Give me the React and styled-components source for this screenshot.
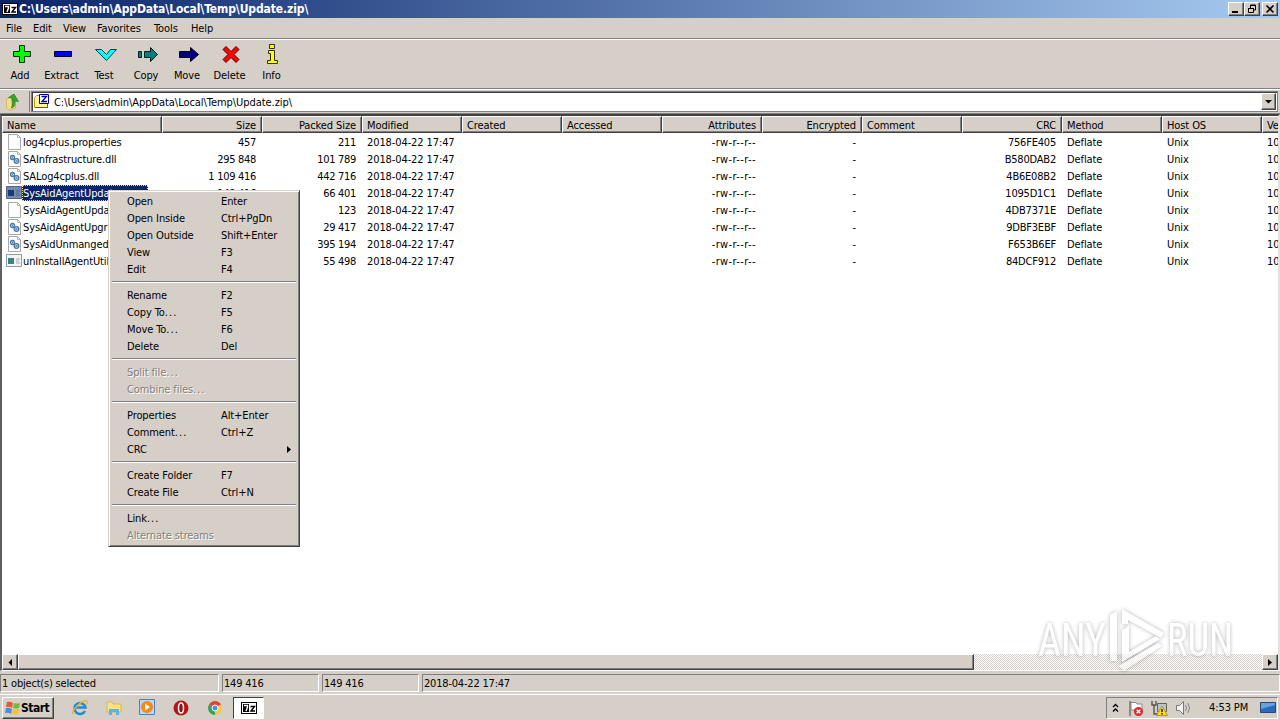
import React from 'react';
import styled, { createGlobalStyle, css } from 'styled-components';

const GlobalStyle = createGlobalStyle`
    *{
        box-sizing:border-box;
    }
    body{
        margin:0;
        background:#d5cfc8;
        overflow:hidden;
        font-family:"DejaVu Sans Condensed", "DejaVu Sans", sans-serif;
        font-stretch:condensed;
        font-size:11px;
        letter-spacing:-0.1px;
        color:#000;
        cursor:default;
    }
    svg{
        display:block;
        flex:none;
    }
`

const raised = css`
    background:#d5cfc8;
    border:1px solid;
    border-color:#fff #404040 #404040 #fff;
    box-shadow:inset -1px -1px 0 #808080;
`

const Desktop = styled.div`
    width:1280px;
    height:720px;
    display:flex;
    flex-direction:column;
    overflow:hidden;
    background:#d5cfc8;
`

const TitleBar = styled.div`
    height:18px;
    flex:none;
    display:flex;
    align-items:center;
    padding:0 2px;
    background:linear-gradient(90deg, #0a246a, #a6caf0);
    color:#fff;
    h1{
        flex:1;
        margin:0 0 0 1px;
        font-size:12px;
        line-height:18px;
        font-weight:bold;
        letter-spacing:-0.1px;
        white-space:nowrap;
    }
`

const WindowButton = styled.button`
    ${raised}
    width:16px;
    height:14px;
    padding:0;
    margin-left:${props => props.$gap ? 2 : 0}px;
    display:flex;
    align-items:center;
    justify-content:center;
`

const MenuBar = styled.div`
    height:21px;
    flex:none;
    display:flex;
    gap:12px;
    padding:0 6px;
    line-height:21px;
    border-bottom:1px solid #808080;
`

const MenuItem = styled.span`
    width:${props => props.$w}px;
    white-space:nowrap;
`

const ToolBar = styled.div`
    height:50px;
    flex:none;
    display:flex;
    padding-left:2px;
    border-top:1px solid #fff;
    border-bottom:1px solid #808080;
`

const Tool = styled.div`
    width:${props => props.$w}px;
    display:flex;
    flex-direction:column;
    align-items:center;
    padding-top:3px;
    gap:3px;
    line-height:14px;
    white-space:nowrap;
    svg{
        margin-left:3px;
    }
`

const AddressBar = styled.div`
    height:25px;
    flex:none;
    display:flex;
    align-items:center;
    border-top:1px solid #fff;
    border-bottom:1px solid #808080;
`

const UpButton = styled.div`
    width:30px;
    height:21px;
    padding-left:4px;
    display:flex;
    align-items:center;
    border-right:1px solid #808080;
`

const PathBox = styled.div`
    flex:1;
    height:21px;
    margin:0 2px 0 1px;
    padding-left:1px;
    display:flex;
    align-items:center;
    background:#fff;
    border:1px solid #808080;
    box-shadow:inset 1px 1px 0 #404040;
    span{
        flex:1;
        padding-top:1px;
        margin-left:4px;
        letter-spacing:-0.05px;
    }
`

const DropButton = styled.div`
    ${raised}
    width:15px;
    height:17px;
    margin-right:1px;
    display:flex;
    align-items:center;
    justify-content:center;
`

const ListView = styled.div`
    height:557px;
    flex:none;
    display:flex;
    flex-direction:column;
    background:#fff;
    border:2px solid;
    border-width:2px 2px 1px 2px;
    border-color:#404040 #e4e1dc #fff #606060;
`

const Row = styled.div`
    height:17px;
    flex:none;
    display:flex;
    line-height:17px;
    overflow:hidden;
`

const Head = styled(Row)`
    margin-bottom:1px;
`

const Cell = styled.div`
    width:${props => props.$w}px;
    flex:none;
    padding:0 6px 0 5px;
    text-align:${props => props.$right ? 'right' : 'left'};
    letter-spacing:${props => props.$ls || -0.1}px;
    white-space:pre;
    overflow:hidden;
`

const HeadCell = styled(Cell)`
    ${raised}
    padding:0 5px 0 4px;
`

const NameCell = styled.div`
    width:160px;
    flex:none;
    display:flex;
    padding-left:4px;
    white-space:nowrap;
`

const FileName = styled.span`
    height:16px;
    line-height:17px;
    padding:0 1px;
    letter-spacing:-0.12px;
    ${props => props.$selected && css`
        width:126px;
        background:#0a246a;
        color:#fff;
        outline:1px dotted #f5db95;
        outline-offset:-1px;
    `}
`

const Body = styled.div`
    flex:1;
    overflow:hidden;
`

const ScrollBar = styled.div`
    height:16px;
    flex:none;
    display:flex;
    background:repeating-conic-gradient(#fff 0 25%, #d5cfc8 0 50%) 0 0/2px 2px;
`

const ScrollArrow = styled.div`
    ${raised}
    width:16px;
    height:16px;
    display:flex;
    align-items:center;
    justify-content:center;
`

const Thumb = styled.div`
    ${raised}
    width:956px;
    margin-right:auto;
`

const StatusBar = styled.div`
    height:20px;
    flex:none;
    display:flex;
    gap:3px;
    margin-top:3px;
`

const StatusCell = styled.div`
    width:${props => props.$w}px;
    flex:${props => props.$w ? 'none' : 1};
    height:18px;
    line-height:17px;
    padding-left:1px;
    border:1px solid;
    border-color:#808080 #fff #fff #808080;
    letter-spacing:-0.2px;
`

const TaskBar = styled.div`
    flex:1;
    display:flex;
    align-items:center;
    border-top:1px solid #fff;
    padding:0 0 0 2px;
`

const StartButton = styled.button`
    ${raised}
    width:52px;
    height:22px;
    padding:0 0 0 2px;
    display:flex;
    align-items:center;
    font:bold 12px "DejaVu Sans Condensed", "DejaVu Sans", sans-serif;
    letter-spacing:-0.5px;
`

const Launch = styled.div`
    width:${props => props.$w}px;
    height:22px;
    display:flex;
    align-items:center;
    justify-content:center;
`

const TaskButton = styled(Launch)`
    background:#fff;
    border:1px solid;
    border-color:#404040 #fff #fff #404040;
    margin-left:-7px;
`

const Tray = styled.div`
    width:172px;
    height:22px;
    margin:0 2px 0 auto;
    padding:0 1px 0 4px;
    display:flex;
    align-items:center;
    border:1px solid;
    border-color:#808080 #fff #fff #808080;
    svg + svg{
        margin-left:7px;
    }
    span{
        margin:0 8px 0 17px;
        flex:1;
        white-space:nowrap;
    }
`

const ContextMenu = styled.div`
    position:absolute;
    left:108px;
    top:190px;
    width:192px;
    height:357px;
    padding:2px 3px;
    background:#d5cfc8;
    border:1px solid;
    border-color:#d5cfc8 #404040 #404040 #d5cfc8;
    box-shadow:inset 1px 1px 0 #fff, inset -1px -1px 0 #808080;
`

const MenuRow = styled.div`
    height:17px;
    line-height:17px;
    padding-left:15px;
    display:flex;
    align-items:center;
    white-space:nowrap;
    color:${props => props.$disabled ? '#808080' : '#000'};
    text-shadow:${props => props.$disabled ? '1px 1px 0 #fff' : 'none'};
    svg{
        margin-left:65px;
    }
`

const Label = styled.span`
    width:94px;
    i{
        font-style:normal;
        letter-spacing:1.1px;
    }
`

const Separator = styled.div`
    height:2px;
    margin:3px 0 4px;
    border-top:1px solid #808080;
    border-bottom:1px solid #fff;
`

const Watermark = styled.div`
    position:absolute;
    left:1032px;
    top:602px;
    filter:drop-shadow(0 0 2px rgba(0,0,0,.45));
    opacity:.65;
`

const SevenZip = () => (
    <svg width="16" height="16">
        <path d="M0 2h16v12H0z" />
        <path d="M1 3h14v10H1z" fill="#fff" />
        <path d="M2 4h6v8H2z" />
        <path d="M3 5.500h3.500v1.500L5 11" fill="none" stroke="#fff" strokeWidth="1.400" />
        <path d="M9.500 6.500h4L10 11h4" fill="none" stroke="#000" strokeWidth="1.400" />
    </svg>
)

const Arrow = ({ d }) => <svg width="7" height="7"><path d={d} /></svg>
const LEFT = 'M5 0v7L1.500 3.500z'
const RIGHT = 'M1 0v7l4-3.500z'
const DOWN = 'M0 2h7L3.500 5.500z'

const TOOLS = [
    { label: 'Add', w: 36, art: <path d="M9.500 2.500h5v6h6v5h-6v6h-5v-6h-6v-5h6z" fill="#0f0" stroke="#003000" /> },
    { label: 'Extract', w: 47, art: <path d="M3.500 8.500h17v5h-17z" fill="#00f" stroke="#000030" /> },
    { label: 'Test', w: 38, art: <path d="M1.500 6.500h6l5 5 4-5h6l-10 11z" fill="#0ff" stroke="#004050" /> },
    { label: 'Copy', w: 46, art: <path d="M2.500 8.500h3v6h-3zM8.500 8.500h6v-4l7 7-7 7v-4h-6z" fill="#008080" stroke="#002020" /> },
    { label: 'Move', w: 36, art: <path d="M2.500 8.500h11v-4l8 7-8 7v-4h-11z" fill="#000080" stroke="#000010" /> },
    { label: 'Delete', w: 49, art: <path d="M7 3.500l5 5 5-5 3 3-5 5 5 5-3 3-5-5-5 5-3-3 5-5-5-5z" fill="#f00" stroke="#500000" /> },
    { label: 'Info', w: 35, art: <path d="M8.500 1.500h5v4h-5zM7.500 7.500h6v10h3v3h-10v-3h3v-7h-2z" fill="#ff0" stroke="#303000" /> },
]

const FileIcon = ({ kind }) => {
    if (kind === 'exe' || kind === 'exeSel') {
        const sel = kind === 'exeSel'
        return (
            <svg width="16" height="16">
                <path d="M.5 1.500h15v12H.5z" fill={sel ? '#7889ae' : '#f4f4f4'} stroke={sel ? '#51648f' : '#8c9aa4'} />
                <path d="M2 5h6v6H2z" fill={sel ? '#153d77' : '#348779'} />
                <path d="M10 6h4M10 8h3M10 10h4" stroke={sel ? '#4b6292' : '#a8aaae'} />
            </svg>
        )
    }
    return (
        <svg width="16" height="16">
            <path d="M2.500.5h9l3 3v12h-12z" fill="#fcfcfc" stroke="#a8a8a8" />
            <path d="M11.500.5v3h3" fill="none" stroke="#b8b8b8" />
            {kind === 'dll' && (
                <g fill="#d4e6f5" stroke="#4878a4" strokeWidth="1.300">
                    <circle cx="6.500" cy="6.500" r="2" />
                    <circle cx="10.500" cy="10" r="2.300" />
                    <path d="M6 6.500h1M9.500 10h2" />
                </g>
            )}
        </svg>
    )
}

const COLUMNS = [
    ['Name', 160], ['Size', 100, true], ['Packed Size', 100, true], ['Modified', 100],
    ['Created', 100], ['Accessed', 100], ['Attributes', 100, true], ['Encrypted', 100, true],
    ['Comment', 100], ['CRC', 100, true], ['Method', 100], ['Host OS', 100], ['Ve', 20],
]

const FILES = [
    ['log4cplus.properties', 'doc', '457', '211', '756FE405'],
    ['SAInfrastructure.dll', 'dll', '295 848', '101 789', 'B580DAB2'],
    ['SALog4cplus.dll', 'dll', '1 109 416', '442 716', '4B6E08B2'],
    ['SysAidAgentUpdat', 'exeSel', '149 416', '66 401', '1095D1C1'],
    ['SysAidAgentUpda', 'doc', '', '123', '4DB7371E'],
    ['SysAidAgentUpgr', 'dll', '', '29 417', '9DBF3EBF'],
    ['SysAidUnmangedU', 'dll', '', '395 194', 'F653B6EF'],
    ['unInstallAgentUtil', 'exe', '', '55 498', '84DCF912'],
]

const MENU = [
    ['Open', 'Enter'], ['Open Inside', 'Ctrl+PgDn'], ['Open Outside', 'Shift+Enter'], ['View', 'F3'], ['Edit', 'F4'],
    null,
    ['Rename', 'F2'], ['Copy To...', 'F5'], ['Move To...', 'F6'], ['Delete', 'Del'],
    null,
    ['Split file...', '', 'disabled'], ['Combine files...', '', 'disabled'],
    null,
    ['Properties', 'Alt+Enter'], ['Comment...', 'Ctrl+Z'], ['CRC', '', 'sub'],
    null,
    ['Create Folder', 'F7'], ['Create File', 'Ctrl+N'],
    null,
    ['Link...', ''], ['Alternate streams', '', 'disabled'],
]

const App = () => (
    <Desktop>
        <GlobalStyle />
        <TitleBar>
            <SevenZip />
            <h1>C:\Users\admin\AppData\Local\Temp\Update.zip\</h1>
            <WindowButton><svg width="10" height="10"><path d="M1 7h6v2H1z" /></svg></WindowButton>
            <WindowButton>
                <svg width="10" height="10"><path d="M3.500 4V1h5v5H6M3 1.500h6M1.500 4.500h5v4h-5zM1 4.500h6" fill="none" stroke="#000" /></svg>
            </WindowButton>
            <WindowButton $gap><svg width="10" height="10"><path d="M1.500 1.500l7 7M8.500 1.500l-7 7" stroke="#000" strokeWidth="1.600" /></svg></WindowButton>
        </TitleBar>
        <MenuBar>
            <MenuItem $w={15}>File</MenuItem>
            <MenuItem $w={18}>Edit</MenuItem>
            <MenuItem $w={22}>View</MenuItem>
            <MenuItem $w={45}>Favorites</MenuItem>
            <MenuItem $w={25}>Tools</MenuItem>
            <MenuItem $w={22}>Help</MenuItem>
        </MenuBar>
        <ToolBar>
            {TOOLS.map(tool => (
                <Tool key={tool.label} $w={tool.w}>
                    <svg width="24" height="23">{tool.art}</svg>
                    {tool.label}
                </Tool>
            ))}
        </ToolBar>
        <AddressBar>
            <UpButton>
                <svg width="18" height="18">
                    <path d="M2.500 6l5-2 4 3v8l-6 2-3-2z" fill="#f5df86" stroke="#d0a850" strokeWidth=".7" />
                    <path d="M7.500 15c3.500-1 4-4 3-7l4 .5L10 1 4.500 4.500l3 .5c1 4 1 7 0 10z" fill="#37a42b" stroke="#277020" strokeWidth=".6" />
                </svg>
            </UpButton>
            <PathBox>
                <svg width="17" height="18">
                    <path d="M1.500 4.500l2-2h3l2 2h6v10h-13z" fill="#fff68c" stroke="#b8a000" />
                    <path d="M2 14.500h12.500v-4" fill="none" stroke="#706000" />
                    <path d="M6.500 1.500h9v9h-9z" fill="#fff" stroke="#0000a0" />
                    <path d="M8.500 3.500h5l-4.500 5h5" fill="none" stroke="#0000a0" strokeWidth="1.300" />
                </svg>
                <span>C:\Users\admin\AppData\Local\Temp\Update.zip\</span>
                <DropButton><Arrow d={DOWN} /></DropButton>
            </PathBox>
        </AddressBar>
        <ListView>
            <Head>
                {COLUMNS.map(([label, w, right]) => <HeadCell key={label} $w={w} $right={right}>{label}</HeadCell>)}
            </Head>
            <Body>
                {FILES.map(([name, kind, size, packed, crc]) => (
                    <Row key={crc}>
                        <NameCell>
                            <FileIcon kind={kind} />
                            <FileName $selected={kind === 'exeSel'}>{name}</FileName>
                        </NameCell>
                        <Cell $w={100} $ls={-0.3} $right>{size}</Cell>
                        <Cell $w={100} $ls={-0.3} $right>{packed}</Cell>
                        <Cell $w={300}>2018-04-22 17:47</Cell>
                        <Cell $w={100} $ls={0.4} $right>-rw-r--r--</Cell>
                        <Cell $w={100} $right>-</Cell>
                        <Cell $w={200} $ls={-0.2} $right>{crc}</Cell>
                        <Cell $w={100}>Deflate</Cell>
                        <Cell $w={100}>Unix</Cell>
                        <Cell $w={20}>10</Cell>
                    </Row>
                ))}
            </Body>
            <ScrollBar>
                <ScrollArrow><Arrow d={LEFT} /></ScrollArrow>
                <Thumb />
                <ScrollArrow><Arrow d={RIGHT} /></ScrollArrow>
            </ScrollBar>
        </ListView>
        <StatusBar>
            <StatusCell $w={219}>1 object(s) selected</StatusCell>
            <StatusCell $w={97}>149 416</StatusCell>
            <StatusCell $w={97}>149 416</StatusCell>
            <StatusCell>2018-04-22 17:47</StatusCell>
        </StatusBar>
        <TaskBar>
            <StartButton>
                <svg width="16" height="16">
                    <path d="M2 2q3-1 6 1L7 8Q4 6 1 7z" fill="#e8582c" />
                    <path d="M9 3q3 1 6 0l-1 5q-3 1-6 0z" fill="#76b83c" />
                    <path d="M1 8q3-1 6 1l-1 5q-3-2-6-1z" fill="#4a8fdc" />
                    <path d="M8 9q3 1 6 0l-1 5q-3 1-6 0z" fill="#f8c030" />
                </svg>
                Start
            </StartButton>
            <Launch $w={52}>
                <svg width="18" height="18">
                    <path d="M14 12a5.500 5.500 0 1 1 .500-3.500H5" fill="none" stroke="#258bd0" strokeWidth="2.600" />
                    <path d="M2 15C-1 13 11 0 16 2q1 1-1 4" fill="none" stroke="#e6b43a" strokeWidth="1.300" />
                </svg>
            </Launch>
            <Launch $w={15}>
                <svg width="18" height="18">
                    <path d="M2 3h5l1 2h8v8H2z" fill="#f6df8d" stroke="#d8b458" />
                    <path d="M4 16v-6h10v6h-3v-3H7v3z" fill="#62b1df" />
                </svg>
            </Launch>
            <Launch $w={52}>
                <svg width="17" height="17">
                    <path d="M.5.5h15v15H.5z" fill="#b8d8f4" stroke="#4884be" />
                    <circle cx="8" cy="8" r="6" fill="#f28a1c" />
                    <path d="M6 4.500l5 3.500-5 3.500z" fill="#fff" />
                </svg>
            </Launch>
            <Launch $w={16}>
                <svg width="16" height="16">
                    <circle cx="8" cy="8" r="7.500" fill="#b81418" />
                    <ellipse cx="8" cy="8" rx="2.500" ry="5" fill="#901014" stroke="#fff" strokeWidth="1.500" />
                </svg>
            </Launch>
            <Launch $w={51}>
                <svg width="14" height="14">
                    <path d="M7 7L1 3.500A7 7 0 0 1 13 3.500z" fill="#dc4438" />
                    <path d="M7 7l6-3.500A7 7 0 0 1 7 14z" fill="#f8ca3c" />
                    <path d="M7 7v7A7 7 0 0 1 1 3.500z" fill="#36a057" />
                    <circle cx="7" cy="7" r="3" fill="#4c8bf5" stroke="#fff" />
                </svg>
            </Launch>
            <TaskButton $w={31}><SevenZip /></TaskButton>
            <Tray>
                <svg width="9" height="12"><path d="M2 5l2.500-2.500L7 5M2 9.500L4.500 7 7 9.500" fill="none" stroke="#000" strokeWidth="1.300" /></svg>
                <svg width="17" height="16">
                    <path d="M3 1v15" stroke="#707070" strokeWidth="1.500" />
                    <path d="M4 2.500h5l1 1.500h5v6H4z" fill="#fff" stroke="#888" />
                    <circle cx="11.500" cy="11.500" r="4.500" fill="#d92a2a" />
                    <path d="M9.700 9.700l3.600 3.600M13.300 9.700l-3.600 3.600" stroke="#fff" strokeWidth="1.500" />
                </svg>
                <svg width="17" height="16">
                    <path d="M6.500 3.500h9v8h-9z" fill="#b8c4cc" stroke="#606060" />
                    <path d="M1 1v4h4V1M3 5v9h4" fill="none" stroke="#555" strokeWidth="1.400" />
                    <path d="M11 6l5.500 9.500h-11z" fill="#ffdc20" stroke="#a08000" strokeWidth=".7" />
                    <path d="M11 9v3M11 13v1.500" stroke="#000" strokeWidth="1.300" />
                </svg>
                <svg width="17" height="16">
                    <path d="M1.500 5.500h3l4-4v13l-4-4h-3z" fill="#f4f4f4" stroke="#777" />
                    <path d="M10.500 5q2 3 0 6M13 3q3 5 0 10" fill="none" stroke="#888" />
                </svg>
                <span>4:53 PM</span>
                <svg width="16" height="14">
                    <path d="M.5 1.500h15v10H.5z" fill="#286cc0" stroke="#244878" />
                    <path d="M1 2h14v2L1 8z" fill="#66a4e0" />
                </svg>
            </Tray>
        </TaskBar>
        <ContextMenu>
            {MENU.map((item, index) => item === null
                ? <Separator key={index} />
                : (
                    <MenuRow key={index} $disabled={item[2] === 'disabled'}>
                        <Label>
                            {item[0].replace('...', '')}
                            {item[0].endsWith('...') && <i>...</i>}
                        </Label>
                        {item[1]}
                        {item[2] === 'sub' && <Arrow d={RIGHT} />}
                    </MenuRow>
                ))}
        </ContextMenu>
        <Watermark>
            <svg width="212" height="76">
                <g fill="#fff" fontFamily="Roboto, sans-serif" fontSize="47">
                    <text x="6" y="54" textLength="68" lengthAdjust="spacingAndGlyphs">ANY</text>
                    <text x="135" y="54" textLength="66" lengthAdjust="spacingAndGlyphs">RUN</text>
                </g>
                <path d="M78 59V13l7-4v50zM90 22V7l42 24-3 5-33-18v4zM90 28l7-4v26l27-16 4 3-38 23zM86 64l40-23 4 3-38 25z" fill="#fff" />
            </svg>
        </Watermark>
    </Desktop>
)

export default App;
